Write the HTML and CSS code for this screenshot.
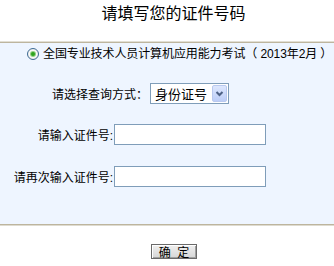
FILE: index.html
```html
<!DOCTYPE html>
<html lang="zh-CN">
<head>
<meta charset="utf-8">
<title>请填写您的证件号码</title>
<link rel="stylesheet" href="styles.css">
</head>
<body>
<div class="page">
  <div class="title">请填写您的证件号码</div>
  <div class="panel">
    <label class="exam">
      <input type="radio" class="radio" name="exam" checked>
      <span class="exam-text">全国专业技术人员计算机应用能力考试（ 2013年2月 ）</span>
    </label>
    <div class="row row-select">
      <span class="label label-wide">请选择查询方式：</span>
      <div class="combo">
        <select class="combo-select"><option>身份证号</option></select>
        <span class="combo-btn">
          <svg width="13" height="15" viewBox="0 0 13 15"><polyline points="3.5,6 6.5,9 9.5,6" fill="none" stroke="#4d6185" stroke-width="2"/></svg>
        </span>
      </div>
    </div>
    <div class="row row-first">
      <span class="label">请输入证件号:</span>
      <input type="text" class="field">
    </div>
    <div class="row row-second">
      <span class="label">请再次输入证件号:</span>
      <input type="text" class="field">
    </div>
  </div>
  <div class="actions">
    <button class="btn" type="button">确 定</button>
  </div>
</div>
</body>
</html>
```
FILE: styles.css
```css
html, body {
  margin: 0;
  padding: 0;
  background: #ffffff;
}
body {
  font-family: "Liberation Sans", "Noto Sans CJK SC", sans-serif;
  font-size: 12px;
  color: #000;
}
.page {
  width: 334px;
}
.title {
  height: 41px;
  padding-left: 13px;
  font-size: 16px;
  line-height: 28px;
  text-align: center;
  border-bottom: 1px solid #e2dfd4;
}
.panel {
  background: #eef5ff;
  border-top: 1px solid #bdb59e;
  border-bottom: 1px solid #bdb59e;
  height: 181px;
  box-shadow: 0 1px 0 #dedbd0;
}
.exam {
  display: flex;
  align-items: center;
  padding-left: 27px;
  margin-top: 4px;
  height: 14px;
  line-height: 14px;
  white-space: nowrap;
}
.exam-text {
  letter-spacing: -0.1px;
}
.radio {
  appearance: none;
  -webkit-appearance: none;
  margin: 0 4px 0 0;
  width: 12px;
  height: 12px;
  border-radius: 50%;
  border: 1px solid #3d6a93;
  background: radial-gradient(circle at 50% 50%, #ffffff 40%, #dcdcd6 100%);
  display: flex;
  align-items: center;
  justify-content: center;
  box-sizing: border-box;
}
.radio:checked::after {
  content: "";
  width: 4px;
  height: 4px;
  border-radius: 50%;
  background: #2fa31f;
  box-shadow: 0 0 0 1px #8fd07f;
}
.row {
  display: flex;
  align-items: center;
  height: 21px;
}
.row-select { margin-top: 22px; }
.row-first { margin-top: 20px; }
.row-second { margin-top: 21px; }
.label {
  width: 113px;
  text-align: right;
  white-space: nowrap;
  flex: none;
}
.label-wide {
  width: 148px;
  margin-right: 2px;
}
.combo {
  display: flex;
  align-items: stretch;
  width: 79px;
  height: 21px;
  box-sizing: border-box;
  border: 1px solid #7f9db9;
  background: #fff;
  padding: 1px 1px 1px 0;
}
.combo-select {
  appearance: none;
  -webkit-appearance: none;
  border: 0;
  outline: none;
  background: transparent;
  font-family: "Noto Sans CJK SC", sans-serif;
  font-size: 13px;
  color: #000;
  padding: 0 0 0 4px;
  margin: 0;
  flex: 1;
  min-width: 0;
  line-height: 17px;
}
.combo-btn {
  width: 15px;
  box-sizing: border-box;
  border: 1px solid #b9c9ef;
  border-radius: 2px;
  background: linear-gradient(#dde7fe, #bccdf7);
  display: flex;
  align-items: center;
  justify-content: center;
}
.field {
  width: 152px;
  height: 21px;
  box-sizing: border-box;
  border: 1px solid #7f9db9;
  background: #fff;
  margin: 0 0 0 1px;
  padding: 1px 3px;
  font-size: 12px;
}
.actions {
  display: flex;
  justify-content: center;
  padding-left: 14px;
  margin-top: 19px;
}
.btn {
  width: 46px;
  height: 15px;
  box-sizing: border-box;
  padding: 0 0 0 2px;
  margin: 0;
  border: 1px solid #6a6a6a;
  background: linear-gradient(#f0f0f0, #d6d6d6);
  box-shadow: inset 1px 1px 0 #ffffff, inset -1px -1px 0 #a0a0a0;
  font-family: "Noto Sans CJK SC", sans-serif;
  font-size: 12px;
  line-height: 13px;
  letter-spacing: 2px;
  color: #000;
  display: flex;
  align-items: center;
  justify-content: center;
  white-space: nowrap;
}
```
